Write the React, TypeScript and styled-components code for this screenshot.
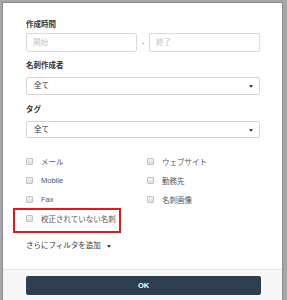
import React from 'react'
import styled, { createGlobalStyle } from 'styled-components'

const GlobalStyle = createGlobalStyle`
  html, body {
    margin: 0;
    padding: 0;
    background: #a6a6a6;
  }
  body {
    font-family: "Liberation Sans", Arial, "Noto Sans CJK JP", sans-serif;
    font-size: 7.5px;
    color: #333;
  }
`

const Page = styled.div`
  height: 300px;
  overflow: hidden;
  padding: 2px 4px 0 2px;
  box-sizing: border-box;
`

const Modal = styled.div`
  height: 298px;
  box-sizing: border-box;
  background: #fff;
  border: 1px solid #8c8c8c;
  border-bottom: none;
  display: flex;
  flex-direction: column;
`

const Body = styled.div`
  padding: 17px 22px 0 23px;
`

const Label = styled.div<{ gap?: number }>`
  height: 10px;
  line-height: 10px;
  font-weight: bold;
  color: #333;
  margin-top: ${p => p.gap ?? 0}px;
  margin-bottom: ${p => p.gap ? 6 : 3}px;
`

const RangeRow = styled.div`
  display: flex;
  align-items: center;
`

const Input = styled.div`
  flex: 1;
  height: 19px;
  box-sizing: border-box;
  border: 1px solid #d9d9d9;
  border-radius: 2px;
  padding-left: 6px;
  line-height: 17px;
  color: #c4c4c4;
`

const Dash = styled.span`
  width: 12px;
  text-align: center;
  color: #666;
`

const Select = styled.div<{ h: number }>`
  position: relative;
  height: ${p => p.h}px;
  line-height: ${p => p.h - 2}px;
  box-sizing: border-box;
  border: 1px solid #d4d4d4;
  border-radius: 2px;
  padding-left: 7px;
  color: #333;
  &::after {
    content: '';
    position: absolute;
    right: 6px;
    top: 50%;
    margin-top: -1px;
    border-left: 2px solid transparent;
    border-right: 2px solid transparent;
    border-top: 3px solid #444;
  }
`

const CheckGrid = styled.div`
  margin-top: 14px;
  display: grid;
  grid-template-columns: 121px 1fr;
  grid-auto-rows: 19px;
`

const CheckItem = styled.label`
  position: relative;
  display: flex;
  align-items: center;
  color: #555;
`

const Box = styled.span`
  width: 7px;
  height: 7px;
  box-sizing: border-box;
  border: 1px solid #c2c2c2;
  border-radius: 1px;
  background: linear-gradient(#f4f4f4, #dedede);
  margin-right: 8px;
`

const Highlight = styled.span`
  position: absolute;
  left: -13px;
  top: -1px;
  width: 108px;
  height: 25px;
  box-sizing: border-box;
  border: 2px solid #e8161c;
`

const MoreFilter = styled.div`
  margin-top: 13px;
  height: 10px;
  line-height: 10px;
  color: #333;
  display: flex;
  align-items: center;
  &::after {
    content: '';
    margin-left: 6px;
    border-left: 2px solid transparent;
    border-right: 2px solid transparent;
    border-top: 3px solid #444;
  }
`

const Footer = styled.div`
  margin-top: auto;
  height: 31px;
  box-sizing: border-box;
  border-top: 1px solid #e6e6e6;
  background: #f7f7f7;
  padding: 6px 21px 0 23px;
`

const OkButton = styled.button`
  display: block;
  width: 100%;
  height: 19px;
  border: none;
  border-radius: 2px;
  background: #2d3e50;
  color: #fff;
  font-family: inherit;
  font-size: 7.5px;
  font-weight: bold;
  padding: 0;
`

const items: Array<{ text: string, mark?: boolean }> = [
  { text: 'メール' },
  { text: 'ウェブサイト' },
  { text: 'Mobile' },
  { text: '勤務先' },
  { text: 'Fax' },
  { text: '名刺画像' },
  { text: '校正されていない名刺', mark: true },
]

export default function App() {
  return (
    <Page>
      <GlobalStyle />
      <Modal>
        <Body>
          <Label>作成時間</Label>
          <RangeRow>
            <Input>開始</Input>
            <Dash>-</Dash>
            <Input>終了</Input>
          </RangeRow>

          <Label gap={9}>名刺作成者</Label>
          <Select h={18}>全て</Select>

          <Label gap={10}>タグ</Label>
          <Select h={17}>全て</Select>

          <CheckGrid>
            {items.map((it, i) => (
              <CheckItem key={i}>
                <Box />
                {it.text}
                {it.mark && <Highlight />}
              </CheckItem>
            ))}
          </CheckGrid>

          <MoreFilter>さらにフィルタを追加</MoreFilter>
        </Body>
        <Footer>
          <OkButton>OK</OkButton>
        </Footer>
      </Modal>
    </Page>
  )
}
